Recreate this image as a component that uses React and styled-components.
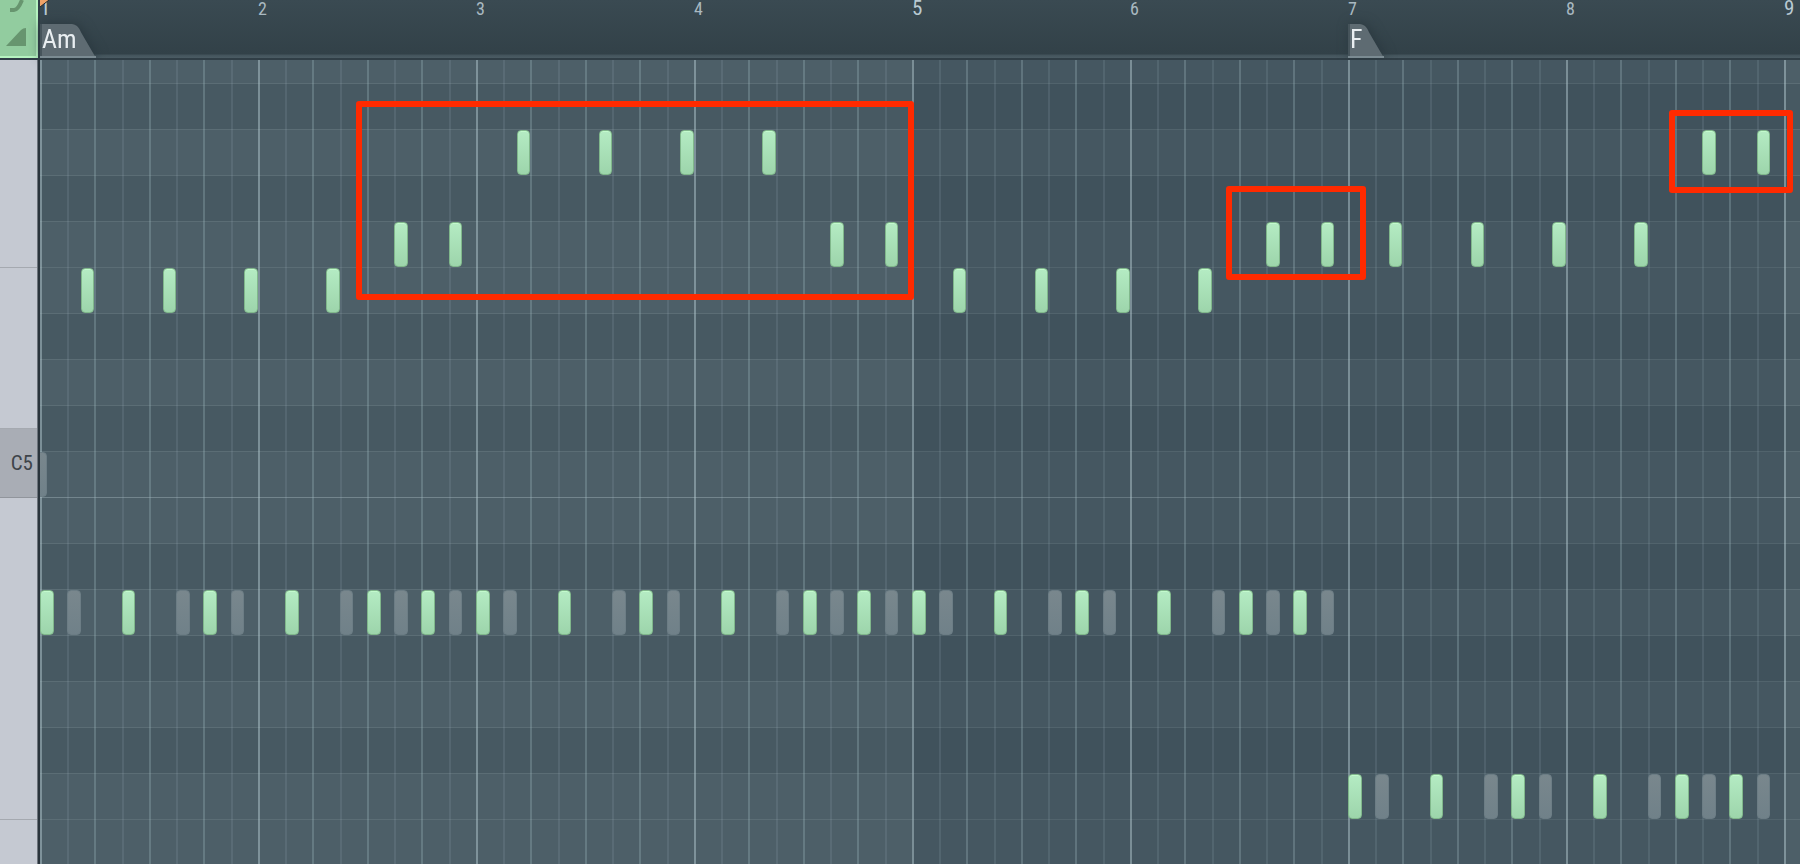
import React from 'react';
import styled, { createGlobalStyle, css } from 'styled-components';

const BAR = 218;
const STEP = BAR / 8;
const TOP_ROW = 24;
const ROW = 46;

const GlobalStyle = createGlobalStyle`
    * {
        box-sizing: border-box;
    }

    body {
        margin: 0;
        background: #4c5e67;
        font-family: "Liberation Sans Narrow", "Roboto Condensed", "Open Sans Condensed", "Noto Sans Condensed", "Roboto", sans-serif;
    }
`;

const Editor = styled.main`
    display: grid;
    grid-template-columns: 40px 1fr;
    grid-template-rows: 60px 1fr;
    min-height: 100vh;
    max-height: 100vh;
    overflow: hidden;
`;

const ToolButton = styled.button`
    display: block;
    width: 38px;
    height: 58px;
    padding: 0;
    border: 0;
    border-right: 2px solid #b5f3c0;
    border-bottom: 2px solid #b5f3c0;
    background: #92cc9f;
`;

const Corner = styled.div`
    background: #2f3d46;
`;

const Timeline = styled.header`
    display: flex;
    position: relative;
    min-width: 0;
    background: linear-gradient(#3a4a52, #324148 54px, #43535b 55px, #4b5c64 58px, #303e46 58px);
`;

const TimelineBar = styled.div`
    flex: ${({ $last }) => ($last ? '1 0 0' : `0 0 ${BAR}px`)};
    min-width: 0;
`;

const BarNumber = styled.span`
    display: block;
    line-height: ${({ $major }) => ($major ? 16 : 18)}px;
    font-size: ${({ $major }) => ($major ? 21 : 18)}px;
    color: ${({ $major }) => ($major ? '#b9cad3' : '#a9b9c1')};
`;

const Playhead = styled.svg`
    position: absolute;
    top: 0;
    left: 0;
`;

const Chord = styled.div`
    position: absolute;
    top: 24px;
    left: ${({ $bar }) => $bar * BAR}px;
    width: ${({ $wide }) => ($wide ? 56 : 36)}px;
    height: 34px;
    padding-left: 2px;
    line-height: 30px;
    font-size: 26px;
    color: #e9eef1;
    filter: drop-shadow(2px 0 6px #2a383f);
`;

const ChordShape = styled.svg`
    position: absolute;
    top: 0;
    left: 0;
    z-index: -1;
`;

const Keyboard = styled.aside`
    min-height: 0;
    overflow: hidden;
    border-right: 2px solid #2a343c;
    box-shadow: inset -1px 0 #6d747c;
    background: #c5c9d2;
`;

const Key = styled.div`
    display: flex;
    align-items: center;
    justify-content: flex-end;
    height: ${({ $height }) => $height}px;
    padding-right: 4px;
    border-bottom: 1px solid #a5a9b0;
    margin-right: 1px;
    font-size: 21px;
    color: #3e444a;

    ${({ $root }) => $root && css`
        border-color: #91959c;
        background: #a9adb5;
    `}
`;

const Roll = styled.section`
    position: relative;
    min-width: 0;
    min-height: 0;
    overflow: hidden;
`;

const Lane = styled.div`
    height: ${({ $first }) => ($first ? TOP_ROW : ROW)}px;
    border-bottom: 1px solid ${({ $octave }) => ($octave ? '#73858d' : '#5b6d75')};
    background: ${({ $sharp }) => ($sharp ? '#475962' : '#4d5f68')};
`;

const Bars = styled.div`
    display: flex;
    position: absolute;
    inset: 0;
`;

const Bar = styled.div`
    display: grid;
    grid-template-columns: 27px 27px 28px 27px 27px 27px 28px 27px;
    flex: 0 0 ${BAR}px;
    background: ${({ $shaded }) => ($shaded ? 'rgba(30, 50, 62, 0.16)' : 'transparent')};
`;

const Step = styled.div`
    border-left: 2px solid rgba(160, 184, 192, 0.15);

    &:nth-child(odd) {
        border-color: rgba(160, 184, 192, 0.3);
    }

    &:first-child {
        border-color: rgba(180, 202, 210, 0.48);
    }
`;

const Note = styled.i`
    position: absolute;
    height: 45px;
    border: 1px solid #80b78b;
    border-radius: 4px;
    background: linear-gradient(#b4ebc3, #9dd5ab);
    box-shadow: inset 0 1px #c3facd;

    ${({ $ghost }) => $ghost && css`
        border-color: #6c7d85;
        background: linear-gradient(#79878d, #708189);
        box-shadow: none;
    `}
`;

const Highlight = styled.div`
    position: absolute;
    border: 6px solid #ff2a00;
    border-radius: 3px;
`;

const lanes = ['A', 'G#', 'G', 'F#', 'F', 'E', 'D#', 'D', 'C#', 'C', 'B', 'A#', 'A2', 'G#2', 'G2', 'F#2', 'F2', 'E2'];

const keys = [
    { id: 'upper', height: 208 },
    { id: 'middle', height: 161 },
    { id: 'c5', height: 69, label: 'C5', root: true },
    { id: 'lower', height: 322 },
    { id: 'bottom', height: 60 },
];

const melody = [
    ['E', [1.5, 4.5, 7.5, 10.5, 33.5, 36.5, 39.5, 42.5]],
    ['F', [13, 15, 29, 31, 45, 47, 49.5, 52.5, 55.5, 58.5]],
    ['G', [17.5, 20.5, 23.5, 26.5, 61, 63]],
];

// the bass pattern repeats every two bars
const bass = [
    ['A2', 0],
    ['A2', 16],
    ['A2', 32],
    ['F2', 48],
];
const bassHits = [0, 3, 6, 9, 12, 14];
const ghostHits = [1, 5, 7, 11, 13, 15];

const notes = [
    { lane: 'C', at: -0.25, ghost: true },
    ...melody.flatMap(([lane, steps]) => steps.map((at) => ({ lane, at }))),
    ...bass.flatMap(([lane, start]) => [
        ...bassHits.map((hit) => ({ lane, at: start + hit })),
        ...ghostHits.map((hit) => ({ lane, at: start + hit, ghost: true })),
    ]),
];

const highlights = [
    { left: 316, top: 41, width: 558, height: 199 },
    { left: 1186, top: 126, width: 140, height: 94 },
    { left: 1629, top: 50, width: 124, height: 83 },
];

// halves go down, so that notes stay on the grid lines
const snap = (value) => Math.ceil(value - 0.5);

function notePosition({ lane, at }) {
    const left = snap(at * STEP);
    const right = snap((at + 0.5) * STEP);

    return {
        left,
        top: TOP_ROW + (lanes.indexOf(lane) - 1) * ROW,
        width: right - left,
    };
}

function ChordMarker({ name, bar, wide }) {
    const end = wide ? 56 : 36;

    return (
        <Chord $bar={bar} $wide={wide}>
            <ChordShape width={end} height="34" aria-hidden="true">
                <path d="M1 0V34" stroke="#46545b" strokeWidth="2" />
                <path d={`M2 0H${end - 24}C${end - 18} 1 ${end - 17} 4 ${end - 14} 10L${end} 34H2Z`} fill="#5e6b72" />
                <path d={`M0 33H${end}`} stroke="#7b8b92" strokeWidth="2" />
            </ChordShape>
            {name}
        </Chord>
    );
}

function App() {
    const bars = [1, 2, 3, 4, 5, 6, 7, 8, 9];

    return (
        <>
            <GlobalStyle />
            <Editor>
                <Corner>
                    <ToolButton aria-label="Note properties">
                        <svg width="36" height="56" aria-hidden="true">
                            <path d="M10 10H14Q18 10 22 0" fill="none" stroke="#67956f" strokeWidth="4" />
                            <path d="M6 46L21 30Q23 28 26 28V46Z" fill="#67956f" />
                        </svg>
                    </ToolButton>
                </Corner>
                <Timeline>
                    {bars.map((bar) => (
                        <TimelineBar key={bar} $last={bar === 9}>
                            <BarNumber $major={bar % 4 === 1}>{bar}</BarNumber>
                        </TimelineBar>
                    ))}
                    <Playhead width="12" height="8" aria-hidden="true">
                        <path d="M0 0H9L0 7Z" fill="#f0a267" />
                        <path d="M9 0L0 7" stroke="#20282d" strokeWidth="1" />
                    </Playhead>
                    <ChordMarker name="Am" bar={0} wide />
                    <ChordMarker name="F" bar={6} />
                </Timeline>
                <Keyboard>
                    {keys.map(({ id, height, label, root }) => (
                        <Key key={id} $height={height} $root={root}>{label}</Key>
                    ))}
                </Keyboard>
                <Roll>
                    {lanes.map((lane, i) => (
                        <Lane key={lane} $first={i === 0} $sharp={lane.includes('#')} $octave={lane === 'C'} />
                    ))}
                    <Bars>
                        {bars.map((bar) => (
                            <Bar key={bar} $shaded={bar > 4 && bar < 9}>
                                {[0, 1, 2, 3, 4, 5, 6, 7].map((step) => <Step key={step} />)}
                            </Bar>
                        ))}
                    </Bars>
                    {notes.map((note) => (
                        <Note key={`${note.lane}-${note.at}`} $ghost={note.ghost} style={notePosition(note)} />
                    ))}
                    {highlights.map((box) => (
                        <Highlight key={box.left} style={box} />
                    ))}
                </Roll>
            </Editor>
        </>
    );
}

export default App;
